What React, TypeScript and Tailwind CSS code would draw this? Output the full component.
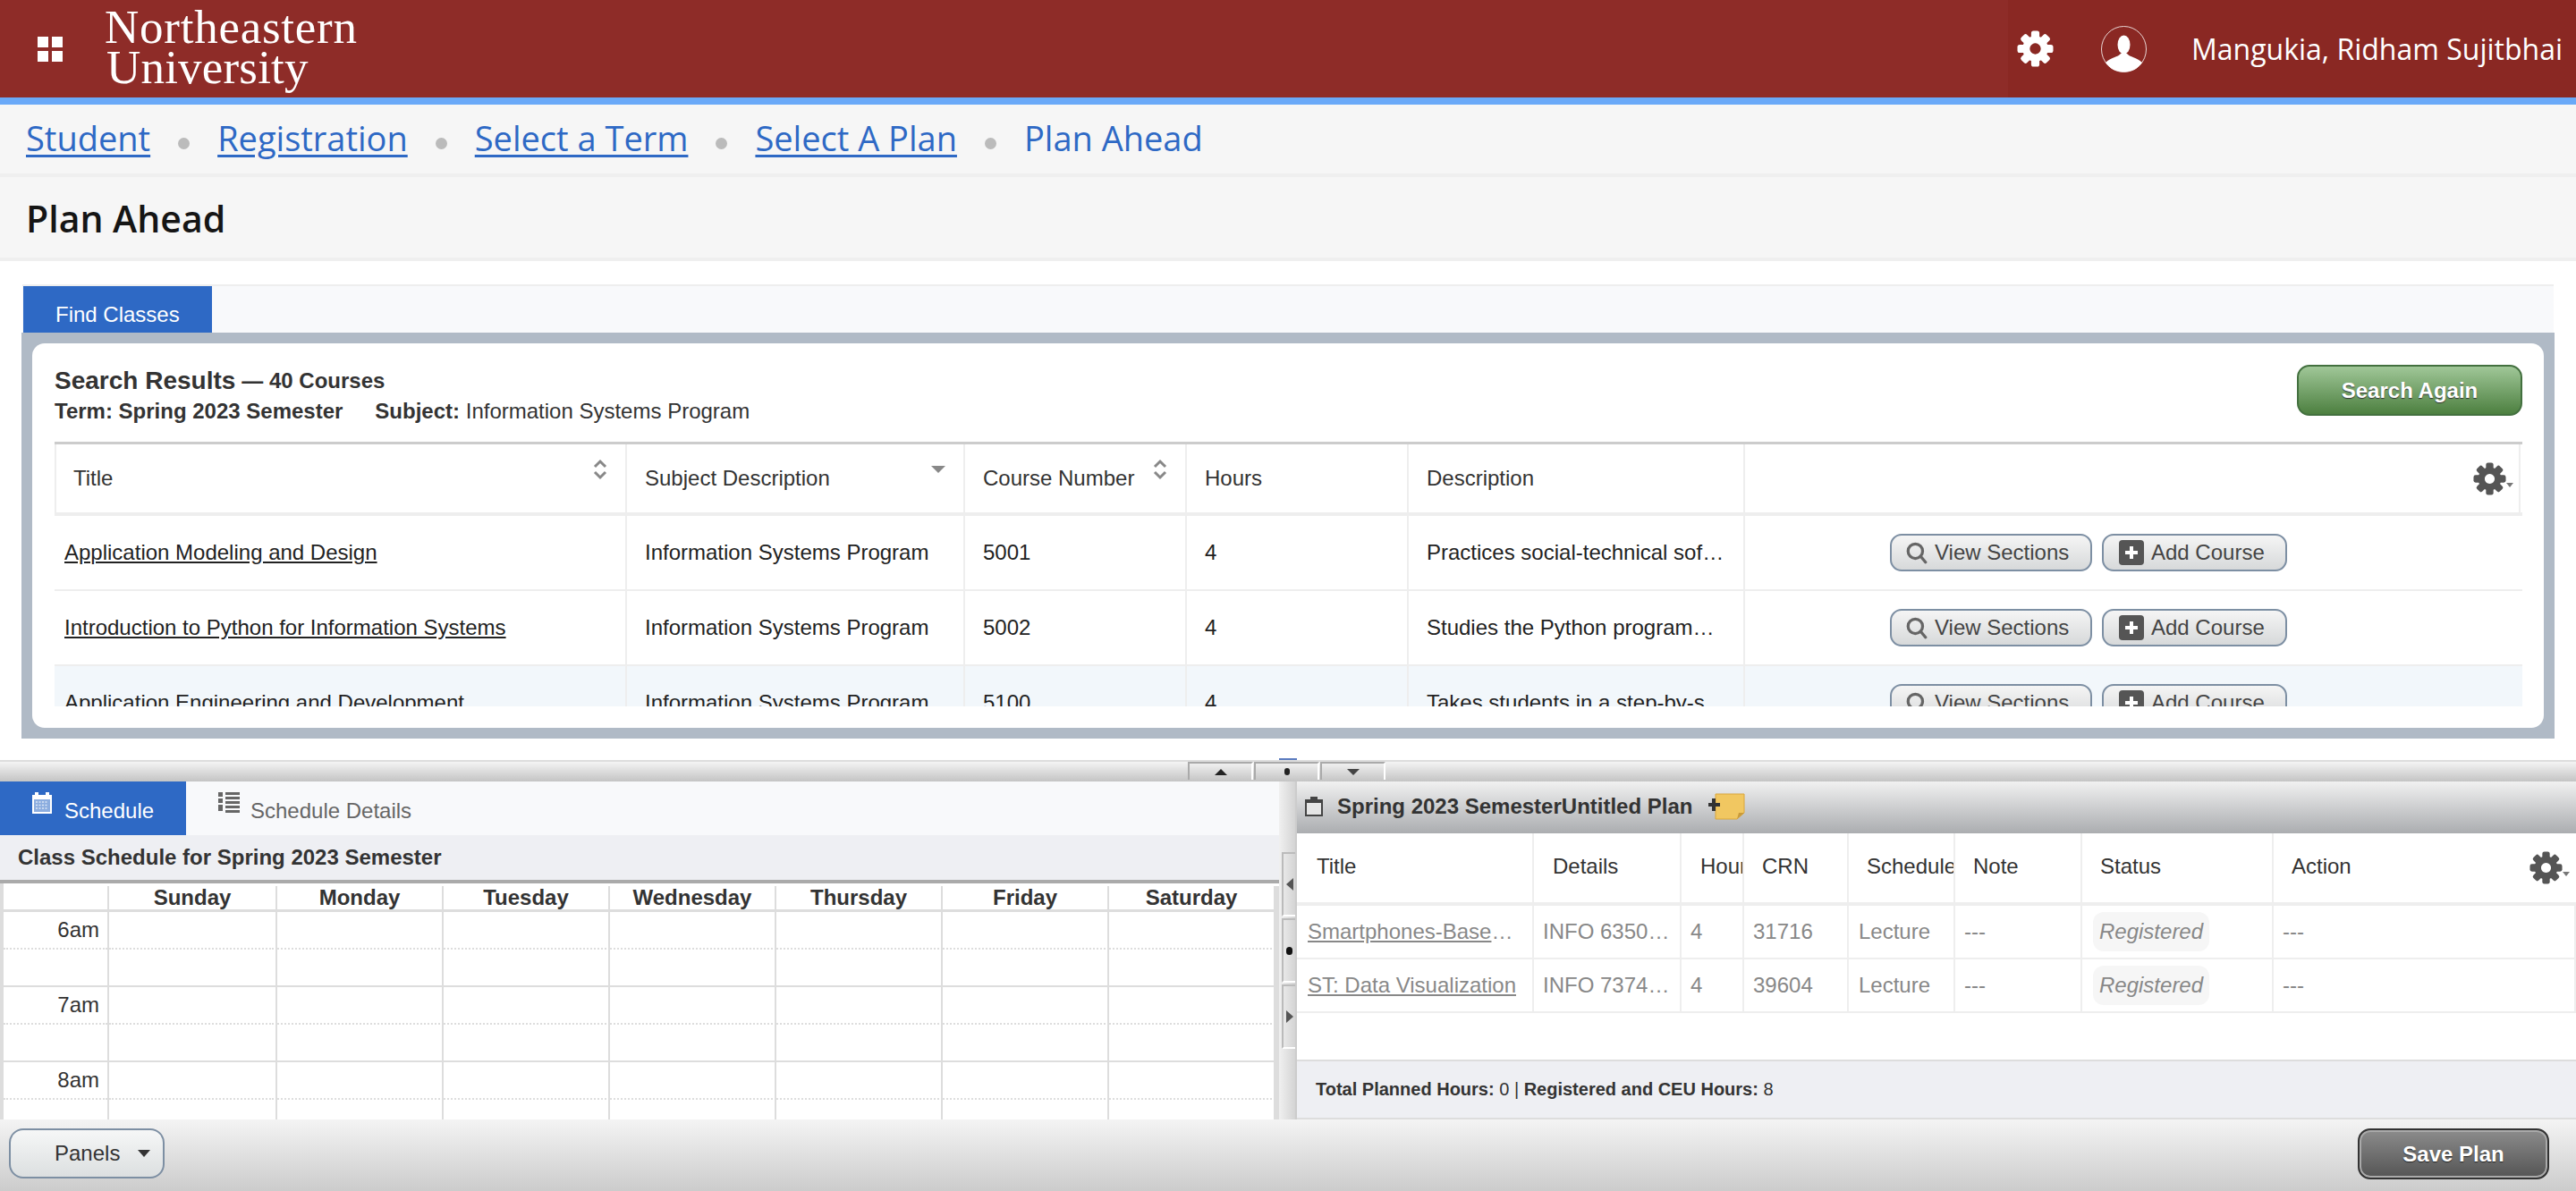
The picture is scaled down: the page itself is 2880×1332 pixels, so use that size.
import React from "react";

const sans = "font-['Liberation_Sans',Arial,sans-serif]";
const openSans = "font-['Open_Sans',sans-serif]";

function GearGlyph({ className, hole = 5 }: { className: string; hole?: number }) {
  return (
    <svg viewBox="0 0 40 40" className={className} fill="currentColor">
      {[0, 45, 90, 135, 180, 225, 270, 315].map((a) => (
        <rect key={a} x="15.500" y="0.500" width="9" height="11" rx="2.500" transform={`rotate(${a} 20 20)`} />
      ))}
      <path
        fillRule="evenodd"
        d={`M20 6a14 14 0 1 0 .01 0zM20 ${20 - hole}a${hole} ${hole} 0 1 1 -.01 0z`}
      />
    </svg>
  );
}

function Gear({ className }: { className: string }) {
  return (
    <span className={"flex items-end " + className}>
      <GearGlyph className="w-[37px] h-[37px] text-[#555]" hole={6} />
      <span className="w-0 h-0 mb-[9px] border-x-[4px] border-x-transparent border-t-[5px] border-t-[#777]" />
    </span>
  );
}

function Magnifier() {
  return (
    <svg viewBox="0 0 24 24" className="w-[26px] h-[26px]" fill="none" stroke="#666" strokeWidth="3">
      <circle cx="10.5" cy="10.5" r="7.5" />
      <path d="M16 16l5 6" strokeLinecap="round" />
    </svg>
  );
}

function PlusBox() {
  return (
    <svg viewBox="0 0 28 28" className="w-[28px] h-[28px]">
      <rect width="28" height="28" rx="4" fill="#555" />
      <path d="M14 7v14M7 14h14" stroke="#fff" strokeWidth="4" />
    </svg>
  );
}

function ActionButtons() {
  const b =
    "h-[42px] flex items-center rounded-[13px] border-2 border-[#7d8fa3] bg-gradient-to-b from-[#f5f5f5] to-[#d7d9da] text-[24px] text-[#444] " + sans;
  return (
    <div className="pl-[162px] flex gap-[11px]">
      <div className={b + " w-[226px] pl-[15px] gap-[7px]"}>
        <Magnifier />
        <span>View Sections</span>
      </div>
      <div className={b + " w-[207px] pl-[17px] gap-[8px]"}>
        <PlusBox />
        <span>Add Course</span>
      </div>
    </div>
  );
}

const courses = [
  { t: "Application Modeling and Design", n: "5001", d: "Practices social-technical software design and modeling", h: "h-[84px]", bg: "bg-white" },
  { t: "Introduction to Python for Information Systems", n: "5002", d: "Studies the Python programming language and its use", h: "h-[84px]", bg: "bg-white" },
  { t: "Application Engineering and Development", n: "5100", d: "Takes students in a step-by-step journey through development", h: "h-[84px]", bg: "bg-[#f2f7fb]" },
];

const courseCols = "grid grid-cols-[640px_378px_248px_248px_376px_867px]";

function CourseRow({ c }: { c: (typeof courses)[number] }) {
  const cell = "flex items-center border-r-2 border-[#eee] h-full min-w-0 pl-[20px]";
  return (
    <div className={courseCols + " text-[24px] text-[#222] border-b-2 border-[#eee] " + c.h + " " + c.bg}>
      <div className={cell + " !pl-[11px]"}>
        <span className="underline whitespace-nowrap">{c.t}</span>
      </div>
      <div className={cell}>Information Systems Program</div>
      <div className={cell}>{c.n}</div>
      <div className={cell}>4</div>
      <div className={cell + " pr-[16px]"}>
        <span className="truncate">{c.d}</span>
      </div>
      <div className="flex items-center h-full">
        <ActionButtons />
      </div>
    </div>
  );
}

function SortArrows() {
  return (
    <svg viewBox="0 0 16 24" className="w-[16px] h-[24px] absolute right-[20px] top-[16px]" fill="none" stroke="#888" strokeWidth="3">
      <path d="M2 9l6-6 6 6M2 15l6 6 6-6" />
    </svg>
  );
}

const planCols = "grid grid-cols-[265px_165px_70px_117px_119px_142px_214px_1fr]";

function PlanRow({ title, info, num }: { title: string; info: string; num: string }) {
  const c = "flex items-center border-r-2 border-[#eee] h-full min-w-0 pl-[10px]";
  return (
    <div className={planCols + " h-[60px] border-b-2 border-[#eee] text-[24px] text-[#888]"}>
      <div className={c + " pl-[12px] pr-[12px]"}>
        <span className="truncate">
          <span className="underline">{title}</span>
        </span>
      </div>
      <div className={c + " pr-[8px]"}>
        <span className="truncate">{info}</span>
      </div>
      <div className={c}>4</div>
      <div className={c}>{num}</div>
      <div className={c + " pl-[11px]"}>Lecture</div>
      <div className={c}>---</div>
      <div className={c + " !pl-[12px]"}>
        <span className="h-[44px] px-[7px] flex items-center rounded-[12px] bg-[#f6f6f6] italic">Registered</span>
      </div>
      <div className={c + " border-r-0"}>---</div>
    </div>
  );
}

const calCols = "grid grid-cols-[118px_188px_repeat(6,186px)]";
const days = ["Sunday", "Monday", "Tuesday", "Wednesday", "Thursday", "Friday", "Saturday"];

function HourRow({ label }: { label: string }) {
  return (
    <div className={calCols + " h-[84px] border-b-2 border-[#ddd]"}>
      <div className="border-r-2 border-[#ddd] flex flex-col">
        <div className="h-[42px] border-b-2 border-dotted border-[#ddd] flex items-center justify-end pr-[9px] text-[24px] text-[#333]">{label}</div>
      </div>
      {days.map((d) => (
        <div key={d} className="border-r-2 border-[#ddd] pr-[2px]">
          <div className="h-[42px] border-b-2 border-dotted border-[#ddd]" />
        </div>
      ))}
    </div>
  );
}

function Handle({ children, className = "" }: { children: React.ReactNode; className?: string }) {
  return (
    <div className={"w-[73px] h-[20px] border-t-2 border-x-2 border-t-[#aaa] border-l-[#aaa] border-r-white flex items-center justify-center " + className}>
      {children}
    </div>
  );
}

function VHandle({ children }: { children: React.ReactNode }) {
  return (
    <div className="h-[72px] ml-[3px] border-2 border-r-0 border-[#bbb] border-b-white flex items-center justify-center mb-[2px]">
      {children}
    </div>
  );
}

export default function App() {
  return (
    <div className={"w-[2880px] h-[1332px] overflow-hidden flex flex-col bg-white " + sans}>
      {/* Top bar */}
      <header className="h-[117px] border-b-8 border-[#6aa9f8] bg-[#8e2c28] flex items-center text-white shrink-0">
        <svg viewBox="0 0 28 28" className="w-[28px] h-[28px] ml-[42px]" fill="#fff">
          <rect width="12" height="12" />
          <rect x="16" width="12" height="12" />
          <rect y="16" width="12" height="12" />
          <rect x="16" y="16" width="12" height="12" />
        </svg>
        <div className="ml-[47px] font-['Liberation_Serif',serif] text-[53px] leading-[45px] -mt-[4px]">
          <div className="tracking-[0.75px]">Northeastern</div>
          <div className="pl-[2px] tracking-[0.2px]">University</div>
        </div>
        <div className={"ml-auto w-[635px] h-full bg-[#8a2823] flex items-center " + openSans}>
          <GearGlyph className="w-[41px] h-[41px] ml-[10px] text-white" hole={6} />
          <svg viewBox="0 0 51 52" className="w-[51px] h-[52px] ml-[53px]">
            <ellipse cx="25.5" cy="26" rx="25" ry="25.5" fill="none" stroke="#e8d5d3" strokeWidth="1" />
            <ellipse cx="25.5" cy="21" rx="7" ry="10.5" fill="#fff" />
            <path d="M5 41c6-6 14-6 17-10h7c3 4 11 4 17 10-5 7-12 10.500-20.500 10.500S10 48 5 41z" fill="#fff" />
          </svg>
          <span className="ml-[50px] text-[32px] whitespace-nowrap">Mangukia, Ridham Sujitbhai</span>
        </div>
      </header>

      {/* Breadcrumb */}
      <nav className={"h-[81px] border-b-4 border-[#efefef] bg-[#f6f6f6] flex items-center pl-[29px] pb-[2px] text-[38px] text-[#2e69c5] shrink-0 " + openSans}>
        {["Student", "Registration", "Select a Term", "Select A Plan"].map((t) => (
          <React.Fragment key={t}>
            <span className="underline underline-offset-[4px] decoration-[3px]">{t}</span>
            <span className="w-[13px] h-[13px] rounded-full bg-[#bbb] mx-[31px] mt-[12px]" />
          </React.Fragment>
        ))}
        <span>Plan Ahead</span>
      </nav>

      {/* Title */}
      <div className={"h-[94px] border-b-4 border-[#efefef] bg-[#f6f6f6] flex items-center pl-[29px] pt-[4px] text-[41px] font-semibold text-[#151515] shrink-0 " + openSans}>
        Plan Ahead
      </div>

      {/* Find classes */}
      <section className="h-[558px] shrink-0 pt-[26px] pl-[24px] pr-[24px]">
        <div className="h-[54px] ml-[1px] mr-[1px] border-t-2 border-[#eee] bg-[#f8f9fb] flex">
          <div className="ml-[1px] w-[211px] h-[52px] bg-[#2e69c5] text-white text-[24px] flex items-center pl-[36px] pt-[12px]">Find Classes</div>
        </div>
        <div className="h-[454px] bg-[#b0bac6] pt-[12px] px-[12px] pb-[12px]">
          <div className="h-[430px] bg-white rounded-[14px] pl-[25px] pr-[22px] pt-[24px]">
            <div className="h-[86px] flex justify-between text-[#333]">
              <div>
                <div className="h-[36px] flex items-center font-bold">
                  <span className="text-[28px]">Search Results</span>
                  <span className="text-[24px] ml-[7px]">— 40 Courses</span>
                </div>
                <div className="text-[24px] flex h-[32px] items-center">
                  <b>Term: Spring 2023 Semester</b>
                  <span className="ml-[36px]"><b>Subject:</b> Information Systems Program</span>
                </div>
              </div>
              <div className={"w-[252px] h-[57px] mr-[2px] rounded-[14px] border-2 border-[#43703f] bg-gradient-to-b from-[#a0c798] to-[#4d8040] flex items-center justify-center text-white font-bold text-[24px] [text-shadow:0_1px_1px_#333]"}>
                Search Again
              </div>
            </div>
            {/* table */}
            <div className="w-[2759px] h-[296px] overflow-hidden">
              <div className={courseCols + " h-[83px] border-t-[3px] border-b-4 border-t-[#ccc] border-b-[#eee] text-[24px] text-[#333]"}>
                <div className="relative border-x-2 border-[#eee] flex items-center pl-[19px]">Title<SortArrows /></div>
                <div className="relative border-r-2 border-[#eee] flex items-center pl-[20px]">
                  Subject Description
                  <span className="absolute right-[20px] top-[24px] w-0 h-0 border-x-[8px] border-x-transparent border-t-[8px] border-t-[#888]" />
                </div>
                <div className="relative border-r-2 border-[#eee] flex items-center pl-[20px]">Course Number<SortArrows /></div>
                <div className="border-r-2 border-[#eee] flex items-center pl-[20px]">Hours</div>
                <div className="border-r-2 border-[#eee] flex items-center pl-[20px]">Description</div>
                <div className="relative border-r-2 border-[#eee]">
                  <Gear className="absolute right-[6px] top-[20px]" />
                </div>
              </div>
              {courses.map((c) => (
                <CourseRow key={c.n} c={c} />
              ))}
            </div>
          </div>
        </div>
      </section>

      {/* Horizontal splitter */}
      <div className="relative h-[24px] shrink-0 border-t-2 border-[#ddd] bg-gradient-to-b from-[#f4f4f4] to-[#c4c4c4] flex pl-[1328px] gap-[1px]">
        <span className="absolute left-[1430px] -top-[4px] w-[20px] h-[2px] bg-[#5b7bbf]" />
        <Handle><span className="w-0 h-0 border-x-[7px] border-x-transparent border-b-[7px] border-b-[#222]" /></Handle>
        <Handle><span className="w-[6px] h-[8px] rounded-full bg-[#222]" /></Handle>
        <Handle><span className="w-0 h-0 border-x-[7px] border-x-transparent border-t-[7px] border-t-[#444]" /></Handle>
      </div>

      {/* Lower panels */}
      <div className="h-[378px] shrink-0 flex">
        <div className="w-[1430px] flex flex-col overflow-hidden">
          <div className="h-[60px] bg-[#f8f9fb] flex text-[24px] shrink-0">
            <div className="w-[208px] bg-[#2e69c5] text-white flex pl-[36px] pt-[12px]">
              <svg viewBox="0 0 22 24" className="w-[22px] h-[24px]">
                <path d="M0 3h3V0h4v3h8V0h4v3h3v21H0z" fill="#fff" />
                <rect x="2" y="8" width="18" height="14" fill="#2e69c5" opacity=".55" />
                <path d="M4 11h14M4 14.500h14M4 18h14" stroke="#fff" strokeDasharray="2 1.500" strokeWidth="1.500" opacity=".7" />
              </svg>
              <span className="ml-[14px] mt-[3px]">Schedule</span>
            </div>
            <div className="flex pl-[36px] pt-[12px] text-[#666]">
              <svg viewBox="0 0 24 24" className="w-[24px] h-[24px]" fill="#666">
                <rect width="5" height="5" /><rect y="7" width="5" height="5" /><rect y="14" width="5" height="7" />
                <rect x="8" width="16" height="3" /><rect x="8" y="5" width="16" height="3" /><rect x="8" y="10" width="16" height="3" /><rect x="8" y="15" width="16" height="3" /><rect x="8" y="20" width="16" height="3" />
              </svg>
              <span className="ml-[12px] mt-[3px]">Schedule Details</span>
            </div>
          </div>
          <div className="h-[54px] shrink-0 bg-[#eeeff3] border-b-4 border-[#aaa] flex items-center pl-[20px] font-bold text-[24px] text-[#333]">
            Class Schedule for Spring 2023 Semester
          </div>
          <div className="flex-1 overflow-hidden border-l-4 border-[#ddd] bg-[#ddd]">
            <div className="h-[3px] bg-white" />
            <div className="w-[1422px] bg-white">
              <div className={calCols + " h-[29px] border-b-[3px] border-[#ddd] font-bold text-[24px] leading-[26px] text-[#333]"}>
                <div className="border-r-2 border-[#ddd]" />
                {days.map((d) => (
                  <div key={d} className="border-r-2 border-[#ddd] text-center">{d}</div>
                ))}
              </div>
              <HourRow label="6am" />
              <HourRow label="7am" />
              <HourRow label="8am" />
            </div>
          </div>
        </div>

        {/* Vertical splitter */}
        <div className="w-[20px] shrink-0 bg-gradient-to-r from-[#f0f0f0] to-[#d4d4d4] pt-[79px] border-r-2 border-[#ccc]">
          <VHandle><span className="w-0 h-0 border-y-[7px] border-y-transparent border-r-[8px] border-r-[#555]" /></VHandle>
          <VHandle><span className="w-[7px] h-[9px] rounded-full bg-[#111]" /></VHandle>
          <VHandle><span className="w-0 h-0 border-y-[7px] border-y-transparent border-l-[8px] border-l-[#555]" /></VHandle>
        </div>

        <div className="flex-1 flex flex-col overflow-hidden">
          <div className="h-[58px] shrink-0 bg-gradient-to-b from-[#f1f1f1] to-[#abadb0] flex items-center pl-[8px] pb-[2px] font-bold text-[24px] text-[#333]">
            <svg viewBox="0 0 22 24" className="w-[22px] h-[24px]">
              <path d="M1 4h6V1h8v3h6v19H1z" fill="#444" />
              <rect x="3" y="8" width="16" height="13" fill="#e5e5e5" />
            </svg>
            <span className="ml-[15px]">Spring 2023 SemesterUntitled Plan</span>
            <svg viewBox="0 0 42 30" className="w-[42px] h-[30px] ml-[18px]">
              <path d="M8 1h32v21l-8 7H8z" fill="#f1c761" stroke="#d9a63c" />
              <path d="M32 29l2-7h6z" fill="#c99a3a" />
              <path d="M6 6v14M0 13h13" stroke="#333" strokeWidth="4" />
            </svg>
          </div>
          <div className={planCols + " h-[81px] shrink-0 border-b-4 border-[#eee] text-[24px] text-[#333]"}>
            {[
              ["Title", "pl-[22px]"],
              ["Details", "pl-[21px]"],
              ["Hours", "pl-[21px]"],
              ["CRN", "pl-[20px]"],
              ["Schedule", "pl-[20px]"],
              ["Note", "pl-[20px]"],
              ["Status", "pl-[20px]"],
            ].map(([t, p]) => (
              <div key={t} className={"border-r-2 border-[#eee] flex items-center overflow-hidden whitespace-nowrap pb-[3px] " + p}>{t}</div>
            ))}
            <div className="relative flex items-center pl-[20px] pb-[3px]">
              Action
              <Gear className="absolute right-[7px] top-[20px]" />
            </div>
          </div>
          <PlanRow title="Smartphones-Based Web Development" info="INFO 6350, 03 (31716)" num="31716" />
          <PlanRow title="ST: Data Visualization" info="INFO 7374, 05 (39604)" num="39604" />
          <div className="flex-1" />
          <div className="h-[67px] shrink-0 border-y-2 border-[#ddd] bg-[#eeeff3] flex items-center pl-[21px] pb-[2px] text-[20px] text-[#333]">
            <span><b>Total Planned Hours:</b> 0 | <b>Registered and CEU Hours:</b> 8</span>
          </div>
        </div>
      </div>

      {/* Bottom bar */}
      <footer className="flex-1 bg-gradient-to-b from-[#f4f4f4] to-[#cccccc] flex items-start justify-between pt-[10px] pl-[10px] pr-[30px]">
        <div className="w-[174px] h-[56px] rounded-[16px] border-2 border-[#7d8fa3] bg-gradient-to-b from-[#f6f7f7] to-[#dcdfe0] flex items-center pl-[49px] text-[24px] text-[#333]">
          Panels
          <span className="ml-[20px] w-0 h-0 border-x-[7px] border-x-transparent border-t-[8px] border-t-[#333]" />
        </div>
        <div className="w-[214px] h-[57px] rounded-[14px] border-2 border-[#333] bg-gradient-to-b from-[#8c8c8c] to-[#555] shadow-[inset_0_0_0_2px_#aaa] flex items-center justify-center font-bold text-white text-[24px] [text-shadow:0_1px_1px_#222]">
          Save Plan
        </div>
      </footer>
    </div>
  );
}
